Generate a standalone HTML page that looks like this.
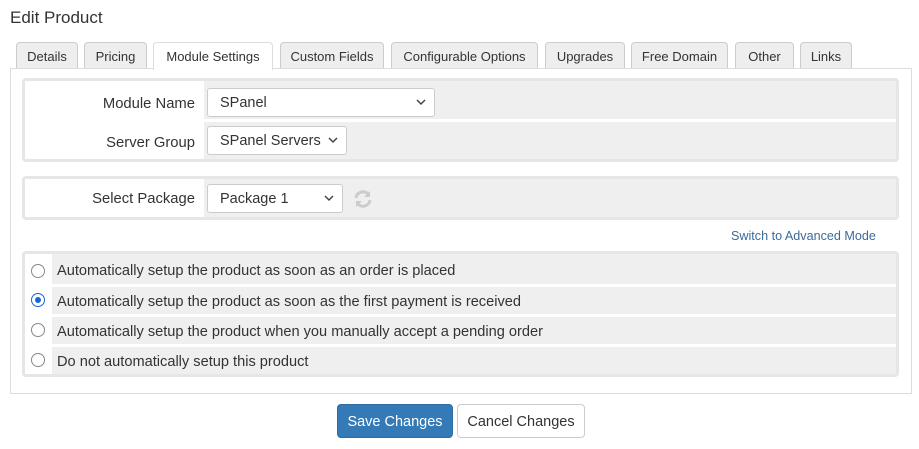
<!DOCTYPE html>
<html><head><style>
*{box-sizing:border-box;margin:0;padding:0}
body{width:919px;height:449px;background:#fff;font-family:"Liberation Sans",sans-serif;font-size:13px;color:#333;position:relative;overflow:hidden}
.a{position:absolute}
.tab{position:absolute;top:42px;height:27px;background:#eee;border:1px solid #ccc;border-bottom:none;border-radius:4px 4px 0 0;text-align:center;line-height:27px;font-size:13px;color:#333}
.tab.on{background:#fff;height:28px;z-index:2;border-color:#ddd}
.panel{left:10px;top:68px;width:902px;height:326px;border:1px solid #ddd}
.box{position:absolute;left:22px;width:877px;border:3px solid #e6e6e6;border-radius:4px;background:#fff}
.cell{position:absolute;background:#efefef}
.lab{position:absolute;text-align:right;width:170px;left:0;font-size:14.8px}
.sel{position:absolute;background:#fff;border:1px solid #ccc;border-radius:3px;height:29px;line-height:29px;padding-left:12px;font-size:14.5px}
.sel svg{position:absolute;right:8px;top:10px}
.rad{position:absolute;left:6px;width:14px;height:14px;border:1.5px solid #888;border-radius:50%;background:#fff}
.rt{position:absolute;left:27px;right:0;background:#efefef;padding-left:5px;padding-top:2px;font-size:14.6px}
.btn{position:absolute;top:404px;height:34px;border-radius:4px;line-height:34px;text-align:center;font-size:14.5px}
</style></head><body>
<div class="a" style="left:10px;top:8px;font-size:17px;color:#333">Edit Product</div>
<div class="tab" style="left:16px;width:62px">Details</div>
<div class="tab" style="left:84px;width:63px">Pricing</div>
<div class="tab on" style="left:153px;width:120px">Module Settings</div>
<div class="tab" style="left:280px;width:104px">Custom Fields</div>
<div class="tab" style="left:391px;width:147px">Configurable Options</div>
<div class="tab" style="left:545px;width:80px">Upgrades</div>
<div class="tab" style="left:631px;width:97px">Free Domain</div>
<div class="tab" style="left:735px;width:59px">Other</div>
<div class="tab" style="left:800px;width:52px">Links</div>
<div class="a panel"></div>
<div class="box" style="top:78px;height:84px">
 <div class="cell" style="left:179px;right:0;top:0;height:38px"></div>
 <div class="cell" style="left:179px;right:0;top:41px;height:37px"></div>
 <div class="lab" style="top:15px">Module Name</div>
 <div class="lab" style="top:54px">Server Group</div>
 <div class="sel" style="left:182px;top:7px;width:228px">SPanel<svg width="10" height="7"><path d="M1 1l4 4 4-4" stroke="#444" stroke-width="1.5" fill="none"/></svg></div>
 <div class="sel" style="left:182px;top:45px;width:140px">SPanel Servers<svg width="10" height="7"><path d="M1 1l4 4 4-4" stroke="#444" stroke-width="1.5" fill="none"/></svg></div>
</div>
<div class="box" style="top:176px;height:44px">
 <div class="cell" style="left:179px;right:0;top:0;height:38px"></div>
 <div class="lab" style="top:12px">Select Package</div>
 <div class="sel" style="left:182px;top:5px;width:136px">Package 1<svg width="10" height="7"><path d="M1 1l4 4 4-4" stroke="#444" stroke-width="1.5" fill="none"/></svg></div>
 <svg class="a" style="left:328px;top:10px" width="20" height="20" viewBox="0 0 20 20"><path d="M3 9a7 7 0 0 1 12-4" stroke="#ccc" stroke-width="3" fill="none"/><path d="M17 2v6h-6z" fill="#ccc"/><path d="M17 11a7 7 0 0 1-12 4" stroke="#ccc" stroke-width="3" fill="none"/><path d="M3 18v-6h6z" fill="#ccc"/></svg>
</div>
<div class="a" style="left:731px;top:229px;font-size:12.6px;color:#3d6a99">Switch to Advanced Mode</div>
<div class="box" style="top:251px;height:126px">
 <div class="rad" style="top:10px"></div><div class="rt" style="top:0;height:30px;line-height:30px">Automatically setup the product as soon as an order is placed</div>
 <div class="rad" style="top:39px;border-color:#1a66d2"><div style="position:absolute;left:2.5px;top:2.5px;width:6px;height:6px;border-radius:50%;background:#1a66d2"></div></div><div class="rt" style="top:33px;height:27px;line-height:27px">Automatically setup the product as soon as the first payment is received</div>
 <div class="rad" style="top:69px"></div><div class="rt" style="top:63px;height:27px;line-height:27px">Automatically setup the product when you manually accept a pending order</div>
 <div class="rad" style="top:99px"></div><div class="rt" style="top:93px;height:27px;line-height:27px">Do not automatically setup this product</div>
</div>
<div class="btn" style="left:337px;width:116px;background:#337ab7;border:1px solid #2e6da4;color:#fff">Save Changes</div>
<div class="btn" style="left:457px;width:128px;background:#fff;border:1px solid #ccc;color:#333">Cancel Changes</div>
</body></html>
